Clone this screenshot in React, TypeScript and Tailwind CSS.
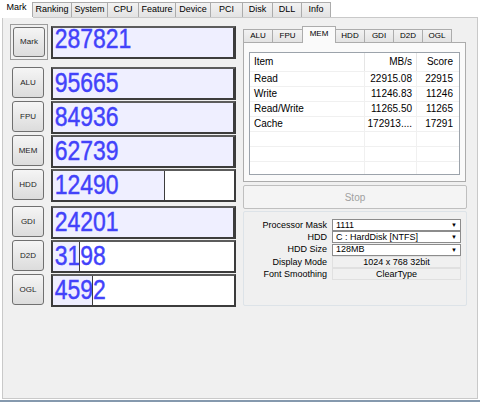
import React from 'react';

const topTabs: [string, number][] = [
  ['Mark', 33],
  ['Ranking', 40],
  ['System', 37],
  ['CPU', 32],
  ['Feature', 38],
  ['Device', 36],
  ['PCI', 33],
  ['Disk', 31],
  ['DLL', 30],
  ['Info', 30],
];

const subTabs: [string, number][] = [
  ['ALU', 30],
  ['FPU', 31],
  ['MEM', 34],
  ['HDD', 30],
  ['GDI', 30],
  ['D2D', 30],
  ['OGL', 30],
];

const memRows = [
  ['Read', '22915.08', '22915'],
  ['Write', '11246.83', '11246'],
  ['Read/Write', '11265.50', '11265'],
  ['Cache', '172913....', '17291'],
  ['', '', ''],
  ['', '', ''],
  ['', '', ''],
];

function ScoreBar({ value, pct, top = false }: { value: string; pct: number; top?: boolean }) {
  return (
    <div className="relative w-[185px] h-[33px] border-2 border-[#3c3c3c] border-t-[#5c5c5c] bg-white">
      <div className="absolute inset-y-0 left-0 bg-[#efefff] border-r border-[#3c3c3c]" style={{ width: `${pct}%` }} />
      <span
        className={
          'relative block pl-[2px] text-[28px] leading-none text-[#4242fa] origin-left scale-x-[0.82] whitespace-nowrap [-webkit-text-stroke:0.45px_#4242fa] ' +
          (top ? '-mt-[3px]' : 'mt-0')
        }
      >
        {value}
      </span>
    </div>
  );
}

function SideButton({ label }: { label: string }) {
  return (
    <div className="w-full h-full flex items-center justify-center rounded-[3px] border border-[#707070] bg-linear-to-b from-[#f5f5f5] to-[#dcdcdc] text-[8px] text-[#1e1e1e]">
      {label}
    </div>
  );
}

function Row({ label, value, pct }: { label: string; value: string; pct: number }) {
  return (
    <div className="flex h-[34px]">
      <div className="ml-[2px] mt-px w-[32px] h-[31px]">
        <SideButton label={label} />
      </div>
      <div className="ml-[7px] mt-px">
        <ScoreBar value={value} pct={pct} />
      </div>
    </div>
  );
}

function Combo({ text }: { text: string }) {
  return (
    <div className="flex items-center w-[129px] h-[12px] border border-[#8c8c8c] bg-white pl-[3px] pr-[3px] text-[9px] leading-none">
      <span className="flex-1">{text}</span>
      <span className="text-[6px]">▼</span>
    </div>
  );
}

function Info({ text }: { text: string }) {
  return (
    <div className="flex items-center justify-center w-[129px] h-[12px] border border-[#e0e0e0] text-[9px] leading-none">
      {text}
    </div>
  );
}

export default function App() {
  return (
    <div className="w-[480px] h-[402px] bg-white flex flex-col font-['Liberation_Sans',Arial,sans-serif] text-black select-none">
      {/* top tab strip */}
      <div className="flex items-end h-[17px] relative z-10">
        {topTabs.map(([t, w], i) =>
          i === 0 ? (
            <div key={t} style={{ width: w }} className="h-[18px] -mb-px bg-white flex items-center justify-center text-[9px] pb-[2px]">
              {t}
            </div>
          ) : (
            <div
              key={t}
              style={{ width: w }}
              className="h-[15px] border border-b-0 border-[#acacac] -ml-px first:ml-0 bg-linear-to-b from-[#f2f2f2] to-[#e3e3e3] flex items-center justify-center text-[9px]"
            >
              {t}
            </div>
          )
        )}
      </div>

      {/* main panel */}
      <div className="ml-[2px] w-[476px] h-[382px] border border-[#c9c9c9] bg-[#f0f0f0] flex pt-[6px] pl-[7px]">
        {/* left column */}
        <div className="w-[226px] flex flex-col">
          <div className="flex h-[36px]">
            <div className="w-[38px] h-[36px] border border-[#9c9c9c] p-[2px]">
              <SideButton label="Mark" />
            </div>
            <div className="ml-[3px] mt-[2px]">
              <ScoreBar value="287821" pct={100} top />
            </div>
          </div>
          <div className="mt-[6px]">
            <Row label="ALU" value="95665" pct={100} />
            <Row label="FPU" value="84936" pct={100} />
            <Row label="MEM" value="62739" pct={100} />
            <Row label="HDD" value="12490" pct={62} />
          </div>
          <div className="mt-[3px]">
            <Row label="GDI" value="24201" pct={100} />
            <Row label="D2D" value="3198" pct={15} />
            <Row label="OGL" value="4592" pct={22} />
          </div>
        </div>

        {/* right column */}
        <div className="ml-[7px] w-[224px] flex flex-col">
          <div className="flex items-end h-[18px] relative z-10">
            {subTabs.map(([t, w]) =>
              t === 'MEM' ? (
                <div
                  key={t}
                  style={{ width: w }}
                  className="h-[17px] -mb-px -ml-px border border-b-0 border-[#acacac] bg-[#fafafa] flex items-center justify-center text-[8px] pb-[3px]"
                >
                  {t}
                </div>
              ) : (
                <div
                  key={t}
                  style={{ width: w }}
                  className="h-[13px] -ml-px first:ml-0 border border-b-0 border-[#acacac] bg-linear-to-b from-[#f2f2f2] to-[#e3e3e3] flex items-center justify-center text-[8px]"
                >
                  {t}
                </div>
              )
            )}
          </div>
          <div className="w-[223px] h-[140px] border border-[#acacac] bg-[#fafafa] pl-[5px] pt-[9px]">
            <div className="w-[211px] h-[123px] border border-[#9ca3ab] bg-white text-[10px] leading-none overflow-hidden">
              <div className="flex h-[19px] border-b border-[#f0f0f0]">
                <div className="w-[115px] flex items-center pl-[4px] border-r border-[#e5e5e5]">Item</div>
                <div className="w-[52px] flex items-center justify-end pr-[4px] border-r border-[#e5e5e5]">MB/s</div>
                <div className="flex-1 flex items-center justify-end pr-[6px]">Score</div>
              </div>
              {memRows.map(([a, b, c], i) => (
                <div key={i} className="flex h-[15px] border-b border-[#f0f0f0]">
                  <div className="w-[115px] flex items-center pl-[4px] border-r border-[#f0f0f0]">{a}</div>
                  <div className="w-[52px] flex items-center justify-end pr-[4px] border-r border-[#f0f0f0]">{b}</div>
                  <div className="flex-1 flex items-center justify-end pr-[6px]">{c}</div>
                </div>
              ))}
            </div>
          </div>

          <div className="mt-[3px] h-[24px] w-[224px] border border-[#bfbfbf] rounded-[2px] bg-[#f4f4f4] flex items-center justify-center text-[10px] text-[#a0a0a0]">
            Stop
          </div>

          <div className="mt-[2px] h-[95px] w-[224px] border border-[#dde3e8] rounded-[2px] pt-[7px] flex flex-col text-[9px]">
            {[
              ['Processor Mask', <Combo text="1111" />],
              ['HDD', <Combo text="C : HardDisk [NTFS]" />],
              ['HDD Size', <Combo text="128MB" />],
              ['Display Mode', <Info text="1024 x 768 32bit" />],
              ['Font Smoothing', <Info text="ClearType" />],
            ].map(([l, c], i) => (
              <div key={i} className="flex items-center h-[12.33px]">
                <div className="w-[83px] text-right leading-none">{l}</div>
                <div className="ml-[5px]">{c}</div>
              </div>
            ))}
          </div>
        </div>
      </div>
      <div className="h-px bg-white" />
      <div className="h-[2px] bg-[#8599ae]" />
    </div>
  );
}
